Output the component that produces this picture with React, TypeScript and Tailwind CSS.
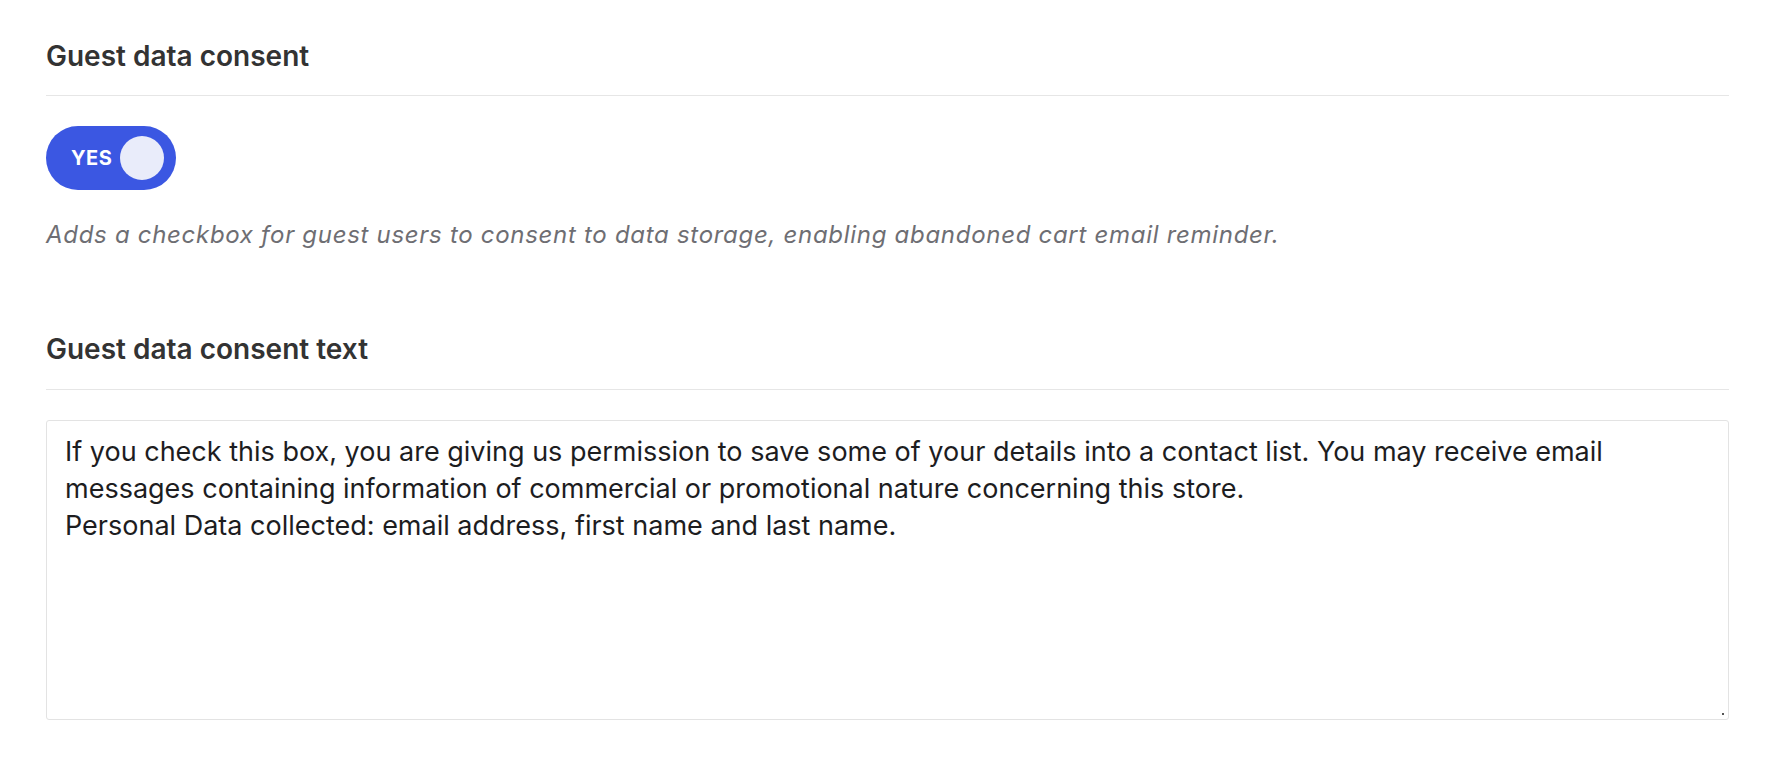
import { useState } from 'react'

const consentText =
    'If you check this box, you are giving us permission to save some of your details into a contact list. You may receive email messages containing information of commercial or promotional nature concerning this store.\nPersonal Data collected: email address, first name and last name.'

const Toggle = ({ checked, onChange }: { checked: boolean; onChange: (v: boolean) => void }) => {
    return (
        <button
            type="button"
            onClick={() => onChange(!checked)}
            className={
                checked
                    ? 'flex items-center justify-between w-[130px] h-[64px] rounded-full bg-[#3b57e2] pl-[25px] pr-[12px]'
                    : 'flex items-center justify-between w-[130px] h-[64px] rounded-full bg-[#c9ccd6] pl-[12px] pr-[25px]'
            }
        >
            {checked ? (
                <>
                    <span className="text-white text-[20px] font-bold tracking-[0.5px]">YES</span>
                    <span className="block w-[44px] h-[44px] rounded-full bg-[#e9ecfa]" />
                </>
            ) : (
                <>
                    <span className="block w-[44px] h-[44px] rounded-full bg-white" />
                    <span className="text-white text-[20px] font-bold">NO</span>
                </>
            )}
        </button>
    )
}

export default function App() {
    const [enabled, setEnabled] = useState<boolean>(true)
    const [text, setText] = useState<string>(consentText)

    return (
        <div className="min-h-screen bg-white pl-[46px] pr-[39px] pt-[39px] font-['Inter',sans-serif]">
            <h2 className="text-[28px] leading-[34px] font-semibold text-[#333] pb-[22px] border-b border-[#e6e6e6]">
                Guest data consent
            </h2>
            <div className="mt-[30px]">
                <Toggle checked={enabled} onChange={setEnabled} />
            </div>
            <p className="mt-[30px] text-[24px] leading-[30px] italic tracking-[0.7px] text-[#6e6e73]">
                Adds a checkbox for guest users to consent to data storage, enabling abandoned cart email reminder.
            </p>
            <h2 className="mt-[82px] text-[28px] leading-[34px] font-semibold text-[#333] pb-[23px] border-b border-[#e6e6e6]">
                Guest data consent text
            </h2>
            <div className="relative mt-[30px]">
                <textarea
                    value={text}
                    onChange={(e) => setText(e.target.value)}
                    className="block w-full h-[300px] resize-none rounded-[3px] border border-[#e3e3e3] bg-white px-[18px] pt-[12px] text-[27px] leading-[37px] text-[#1d1d1f] font-['Inter',sans-serif] focus:outline-none"
                />
                <span className="absolute right-[5px] bottom-[5px] w-[2px] h-[2px] bg-[#555]" />
            </div>
        </div>
    )
}
